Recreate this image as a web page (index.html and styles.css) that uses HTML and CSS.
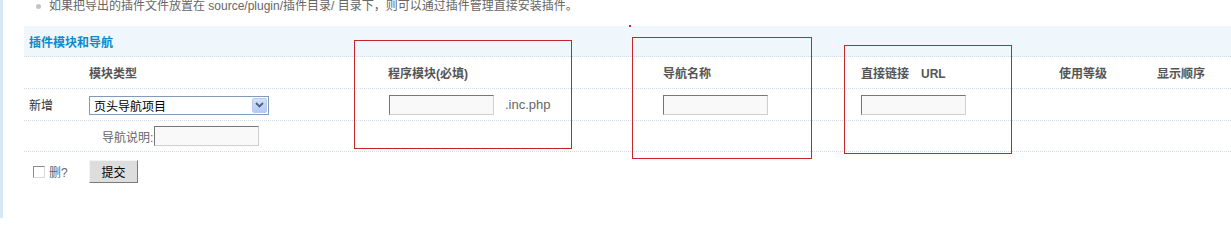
FILE: index.html
```html
<!DOCTYPE html>
<html lang="zh-CN">
<head>
<meta charset="utf-8">
<title>插件模块和导航</title>
<link rel="stylesheet" href="styles.css">
</head>
<body>
<div class="page">
  <div class="tip"><span class="dot"></span>如果把导出的插件文件放置在 source/plugin/插件目录/ 目录下，则可以通过插件管理直接安装插件。</div>
  <div class="panel">
    <div class="band"><h3 class="band-title">插件模块和导航</h3></div>
    <div class="row head">
      <div class="cell"></div>
      <div class="cell">模块类型</div>
      <div class="cell">程序模块(必填)</div>
      <div class="cell">导航名称</div>
      <div class="cell">直接链接　URL</div>
      <div class="cell">使用等级</div>
      <div class="cell">显示顺序</div>
    </div>
    <div class="row">
      <div class="cell first">新增</div>
      <div class="cell">
        <div class="select">
          <span class="select-text">页头导航项目</span>
          <span class="select-btn"><svg width="9" height="6" viewBox="0 0 9 6"><path d="M1 1 L4.5 4.5 L8 1" fill="none" stroke="#4d6185" stroke-width="1.8"/></svg></span>
        </div>
      </div>
      <div class="cell"><span class="field"></span><span class="suffix">.inc.php</span></div>
      <div class="cell"><span class="field"></span></div>
      <div class="cell"><span class="field"></span></div>
      <div class="cell"></div>
      <div class="cell"></div>
    </div>
    <div class="row short">
      <div class="cell"></div>
      <div class="cell span"><span class="desc-label">导航说明:</span><span class="field"></span></div>
    </div>
    <div class="footer">
      <label class="del"><span class="check"></span><span class="del-text">删?</span></label>
      <span class="btn">提交</span>
    </div>
  </div>
  <div class="mark mark1"></div>
  <div class="mark mark2"></div>
  <div class="mark mark3"></div>
  <div class="mark-dot"></div>
</div>
</body>
</html>
```
FILE: styles.css
```css
html, body {
  margin: 0;
  padding: 0;
  background: #fff;
}
body {
  font-family: "Liberation Sans", "Noto Sans CJK SC", sans-serif;
  font-size: 12px;
  color: #666;
}
.page {
  position: relative;
  height: 218px;
  border-left: 3px solid #d8e8f6;
  box-sizing: border-box;
  overflow: hidden;
}
.tip {
  height: 26px;
  line-height: 12px;
  padding-left: 33px;
  white-space: nowrap;
  color: #666;
}
.dot {
  display: inline-block;
  width: 5px;
  height: 5px;
  border-radius: 50%;
  background: #c4c4c4;
  margin-right: 8px;
  vertical-align: 1px;
}
.panel {
  margin-left: 21px;
}
.band {
  height: 30px;
  background: #eff7fd;
  border-bottom: 1px dotted #d3dde4;
  display: flex;
  align-items: center;
  padding-left: 5px;
}
.band-title {
  margin: 0;
  font-size: 12px;
  font-weight: bold;
  color: #1089c6;
}
.row {
  display: grid;
  grid-template-columns: 65px 299px 275px 198px 198px 98px 1fr;
  height: 31px;
  align-items: center;
  border-bottom: 1px dotted #d3dde4;
}
.row.short {
  height: 30px;
}
.head .cell {
  font-weight: bold;
  color: #555;
}
.cell {
  display: flex;
  align-items: center;
  white-space: nowrap;
}
.cell.first {
  padding-left: 5px;
  color: #333;
}
.cell.span {
  grid-column: 2 / 8;
}
.select {
  width: 180px;
  height: 19px;
  box-sizing: border-box;
  border: 1px solid #7f9db9;
  background: #fff;
  display: flex;
  align-items: center;
  justify-content: space-between;
  margin-top: 1px;
}
.select-text {
  color: #000;
  padding-left: 4px;
}
.select-btn {
  width: 15px;
  height: 15px;
  margin-right: 1px;
  box-sizing: border-box;
  border: 1px solid #b8caf5;
  border-radius: 2px;
  background: linear-gradient(#d4e1fc, #b5c9f6);
  display: flex;
  align-items: center;
  justify-content: center;
}
.field {
  display: inline-block;
  width: 105px;
  height: 20px;
  box-sizing: border-box;
  background: #f9f9f9;
  border-top: 1px solid #767676;
  border-left: 1px solid #767676;
  border-right: 1px solid #cfcfcf;
  border-bottom: 1px solid #cfcfcf;
}
.row .cell:nth-child(3) .field {
  margin-left: 1px;
}
.suffix {
  margin-left: 11px;
  font-size: 13px;
  color: #666;
}
.desc-label {
  margin-left: 13px;
  margin-right: 1px;
  color: #666;
}
.footer {
  display: flex;
  align-items: center;
  padding-top: 8px;
  height: 23px;
}
.del {
  width: 65px;
  display: flex;
  align-items: center;
  padding-left: 9px;
  box-sizing: border-box;
  color: #666;
}
.del-text {
  color: #666;
}
.check {
  width: 12px;
  height: 12px;
  box-sizing: border-box;
  background: #fff;
  border-top: 1px solid #8c8c8c;
  border-left: 1px solid #8c8c8c;
  border-right: 1px solid #d8d8d8;
  border-bottom: 1px solid #d8d8d8;
  margin-right: 4px;
}
.btn {
  width: 49px;
  height: 23px;
  box-sizing: border-box;
  background: #dddddd;
  border-top: 1px solid #f4f4f4;
  border-left: 1px solid #f4f4f4;
  border-right: 1px solid #7a7a7a;
  border-bottom: 1px solid #7a7a7a;
  color: #000;
  display: flex;
  align-items: center;
  justify-content: center;
}
.mark {
  position: absolute;
  border: 1px solid #c1272d;
  box-sizing: border-box;
}
.mark1 {
  left: 351px;
  top: 40px;
  width: 218px;
  height: 109px;
}
.mark2 {
  left: 629px;
  top: 37px;
  width: 180px;
  height: 122px;
}
.mark3 {
  left: 841px;
  top: 45px;
  width: 168px;
  height: 109px;
}
.mark-dot {
  position: absolute;
  left: 626px;
  top: 25px;
  width: 2px;
  height: 2px;
  background: #c1272d;
}
```
